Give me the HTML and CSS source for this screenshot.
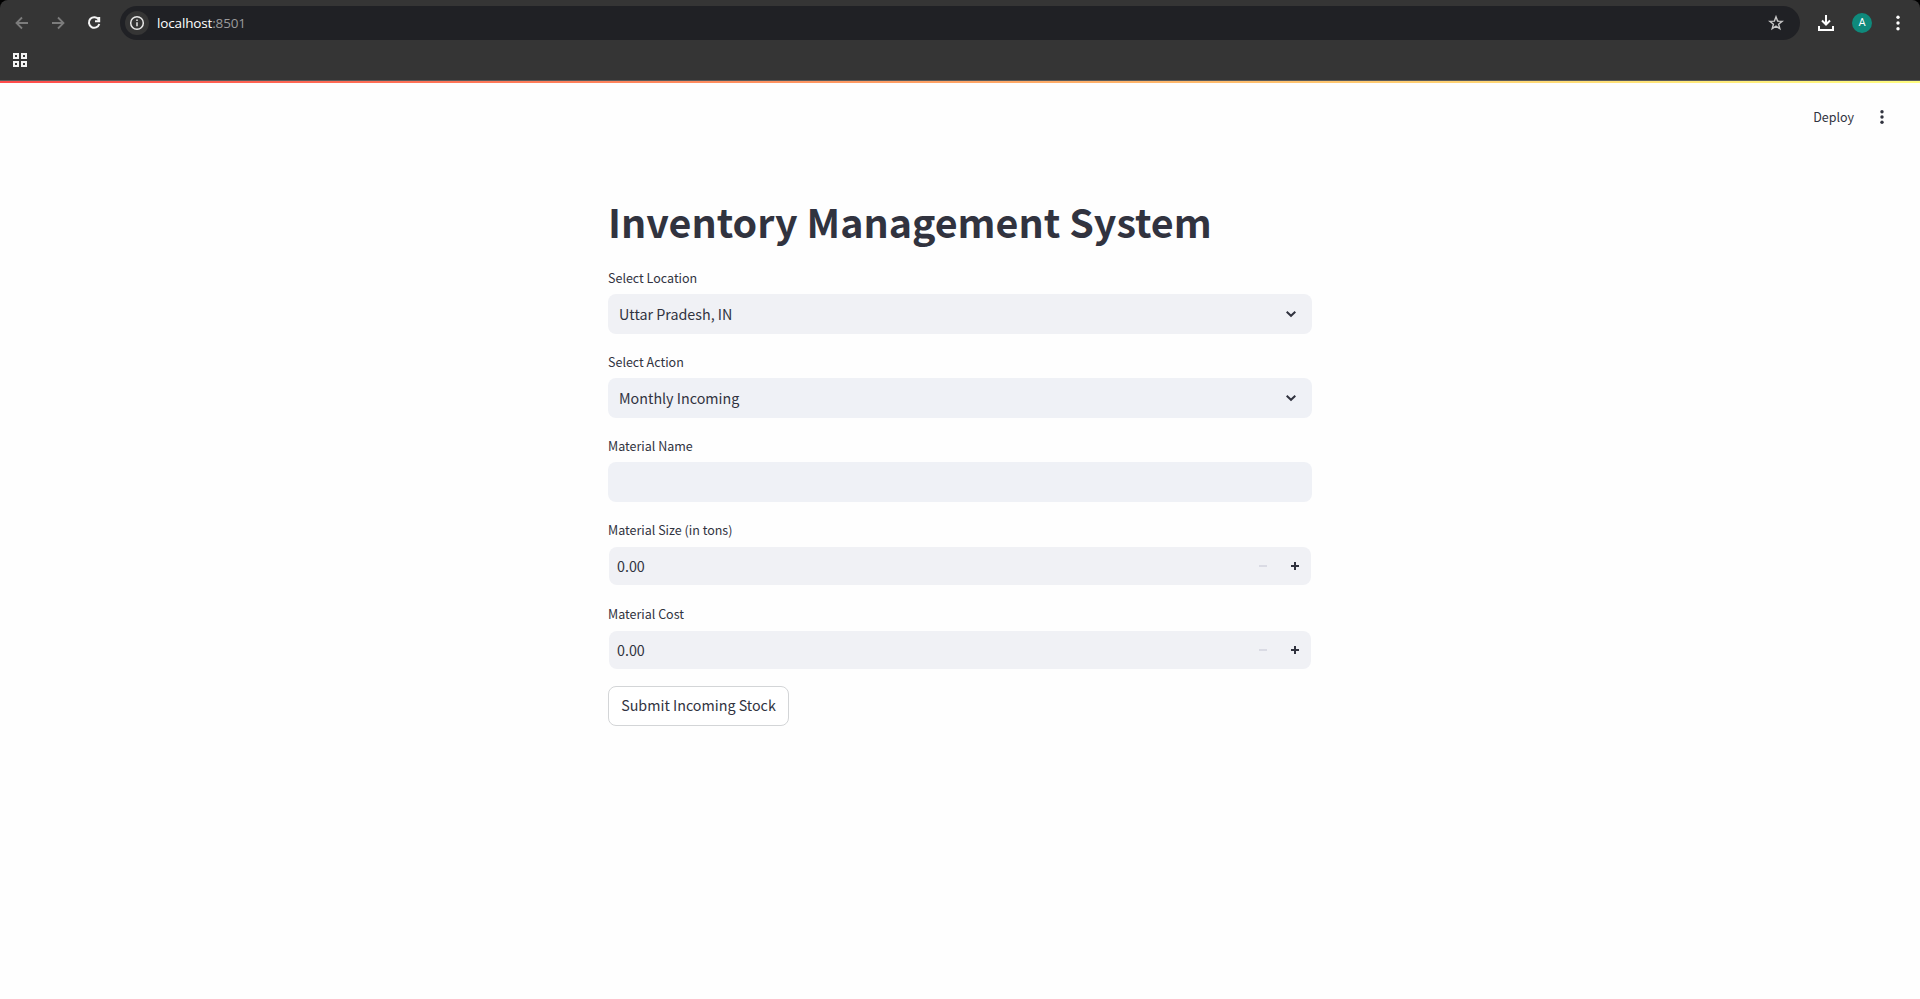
FILE: index.html
```html
<!DOCTYPE html>
<html lang="en">
<head>
<meta charset="utf-8">
<title>Inventory Management System</title>
<link rel="stylesheet" href="styles.css">
</head>
<body>
<div class="browser">
  <div class="toolbar">
    <div class="nav">
      <svg class="dim" width="16" height="16" viewBox="0 0 16 16"><path d="M14 8H3M8 2.5L2.5 8L8 13.5"/></svg>
      <svg class="dim" width="16" height="16" viewBox="0 0 16 16"><path d="M2 8h11M8 2.5L13.500 8L8 13.500"/></svg>
      <svg class="lit" width="16" height="16" viewBox="0 0 16 16"><path d="M12.700 4.600A5.300 5.300 0 1 0 13.300 9M13.200 2v4.200H9"/></svg>
    </div>
    <div class="address">
      <span class="info"><svg width="16" height="16" viewBox="0 0 16 16"><circle cx="8" cy="8" r="6.300"/><path d="M8 7.200v4M8 4.500v1.600"/></svg></span>
      <span class="url">localhost<span class="port">:8501</span></span>
      <svg class="star" width="16" height="16" viewBox="0 0 16 16"><path d="M8 1.800L9.600 6.100L14.200 6.300L10.600 9.200L11.800 13.700L8 11.100L4.200 13.700L5.400 9.200L1.800 6.300L6.400 6.100Z"/></svg>
    </div>
    <svg class="download" width="16" height="18" viewBox="0 0 16 18"><path d="M8 1v9M4 6.500L8 10.500L12 6.500M1 12v4h14v-4"/></svg>
    <span class="avatar">A</span>
    <svg class="kebab" width="4" height="16" viewBox="0 0 4 16"><circle cx="2" cy="2.200" r="1.700"/><circle cx="2" cy="8" r="1.700"/><circle cx="2" cy="13.800" r="1.700"/></svg>
  </div>
  <div class="bookmarks">
    <svg width="16" height="16" viewBox="0 0 16 16"><path d="M2 2h4v4H2zM10 2h4v4h-4zM2 10h4v4H2zM10 10h4v4h-4z"/></svg>
  </div>
</div>
<div class="decoration"></div>
<header class="app-header">
  <span class="deploy">Deploy</span>
  <svg class="menu" width="4" height="16" viewBox="0 0 4 16"><circle cx="2" cy="2.800" r="1.700"/><circle cx="2" cy="8" r="1.700"/><circle cx="2" cy="13.200" r="1.700"/></svg>
</header>
<main class="form">
  <h1 class="title">Inventory Management System</h1>
  <div class="field">
    <div class="label">Select Location</div>
    <div class="control"><span>Uttar Pradesh, IN</span><svg class="chevron" width="12" height="8" viewBox="0 0 12 8"><path d="M1.700 1.800L6 5.800L10.300 1.800"/></svg></div>
  </div>
  <div class="field">
    <div class="label">Select Action</div>
    <div class="control cool"><span>Monthly Incoming</span><svg class="chevron" width="12" height="8" viewBox="0 0 12 8"><path d="M1.700 1.800L6 5.800L10.300 1.800"/></svg></div>
  </div>
  <div class="field">
    <div class="label">Material Name</div>
    <div class="control cool"></div>
  </div>
  <div class="field">
    <div class="label">Material Size (in tons)</div>
    <div class="control number"><span>0.00</span><span class="steps"><i class="minus"></i><svg width="8" height="8" viewBox="0 0 8 8"><path d="M0 4h8M4 0v8"/></svg></span></div>
  </div>
  <div class="field">
    <div class="label">Material Cost</div>
    <div class="control number"><span>0.00</span><span class="steps"><i class="minus"></i><svg width="8" height="8" viewBox="0 0 8 8"><path d="M0 4h8M4 0v8"/></svg></span></div>
  </div>
  <button class="submit">Submit Incoming Stock</button>
</main>
</body>
</html>
```
FILE: styles.css
```css
* { box-sizing: border-box; }
body {
  margin: 0;
  height: 999px;
  overflow: hidden;
  background: #fefefe;
  color: #31333f;
  font-family: "Noto Sans CJK SC", "Noto Sans", sans-serif;
}
svg { display: block; flex: none; fill: none; }
.browser { background: #000; height: 81px; }
.toolbar {
  display: flex;
  align-items: center;
  height: 46px;
  padding-right: 20px;
  background: #353535;
  border-radius: 8px 8px 0 0;
}
.nav { display: flex; gap: 20px; width: 120px; padding-left: 14px; }
.nav svg { stroke-width: 1.8; }
.dim { stroke: #7c7c7c; }
.lit { stroke: #f4f4f4; }
.nav .lit { stroke-width: 2; }
.address {
  display: flex;
  align-items: center;
  flex: 1;
  height: 34px;
  padding: 0 16px 0 5px;
  border-radius: 17px;
  background: #202125;
}
.info {
  display: grid;
  place-items: center;
  width: 24px;
  height: 24px;
  border-radius: 50%;
  background: #353535;
}
.info svg { stroke: #e8e8e8; stroke-width: 1.5; }
.url {
  flex: 1;
  margin-left: 8px;
  color: #fff;
  font: 13.5px/20px "Open Sans", "Noto Sans", sans-serif;
  letter-spacing: -0.15px;
}
.port { color: #9a9a9c; }
.star { stroke: #c8c8c8; stroke-width: 1.4; }
.download { margin-left: 18px; stroke: #fff; stroke-width: 2; }
.avatar {
  width: 20px;
  height: 20px;
  margin-left: 18px;
  border-radius: 50%;
  background: #0f8a7c;
  color: #fff;
  font: 11px/20px Roboto, sans-serif;
  text-align: center;
}
.kebab { margin-left: 24px; fill: #fff; }
.bookmarks {
  height: 35px;
  padding: 6px 0 0 12px;
  background: #353535;
  border-bottom: 1px solid #5c5c5c;
}
.bookmarks svg { stroke: #f4f4f4; stroke-width: 2; }
.decoration { height: 2px; background: linear-gradient(90deg, #ff4b4b, #fffd80); }
.app-header {
  display: flex;
  justify-content: flex-end;
  align-items: center;
  height: 68px;
  padding-right: 36px;
}
.deploy { font-size: 12.500px; line-height: 20px; }
.menu { margin-left: 26px; fill: #31333f; }
.form { width: 704px; margin: 0 auto; padding-top: 40px; }
.title {
  margin: 0;
  height: 75px;
  font-size: 39.400px;
  font-weight: 700;
  line-height: 60px;
  white-space: nowrap;
}
.field { height: 84px; }
.label { height: 28px; font-size: 12.500px; line-height: 24px; }
.control {
  display: flex;
  align-items: center;
  justify-content: space-between;
  height: 40px;
  padding: 0 15px 0 11px;
  border-radius: 8px;
  background: #f0f1f5;
  font-size: 14.300px;
  line-height: 24px;
}
.cool { background: #eff1f6; }
.chevron { stroke: #31333f; stroke-width: 2; }
.number { height: 38px; margin: 1px 1px 0; padding: 0 12px 0 8px; }
.steps { display: flex; align-items: center; gap: 24px; }
.minus { width: 8px; height: 2px; background: #dadbe4; }
.steps svg { stroke: #31333f; stroke-width: 2; }
.submit {
  display: block;
  width: 181px;
  height: 40px;
  padding: 0 0 2px;
  border: 1px solid #d3d5d7;
  border-radius: 8px;
  background: #fff;
  color: #31333f;
  font-family: inherit;
  font-size: 14.300px;
  line-height: 24px;
  white-space: nowrap;
}
```
